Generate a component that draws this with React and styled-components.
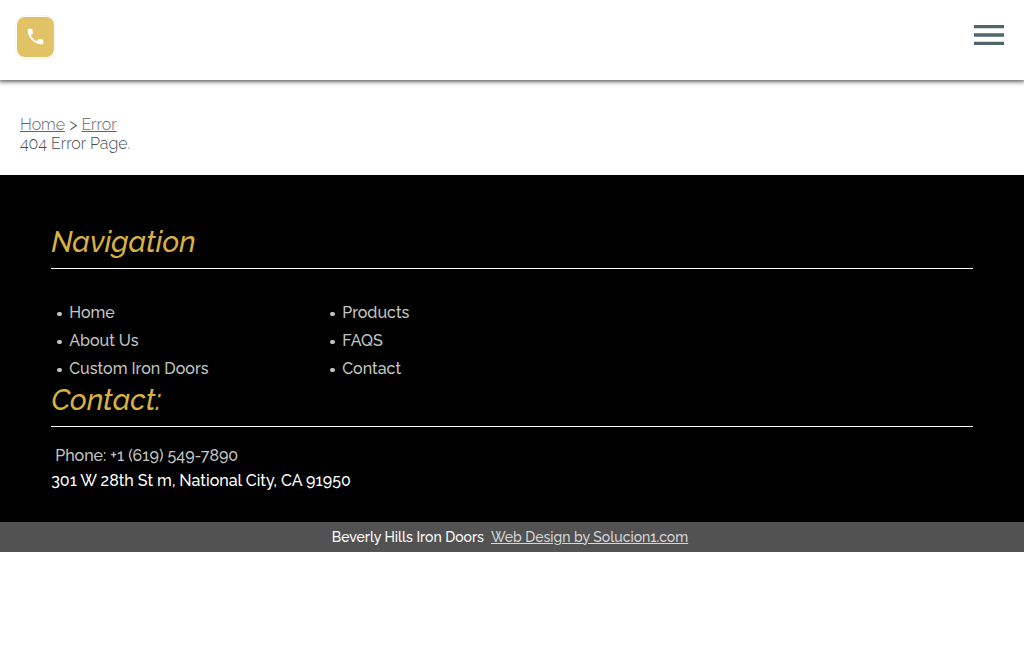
import React from "react";
import styled, { createGlobalStyle } from "styled-components";

const GlobalStyle = createGlobalStyle`
  *, *::before, *::after { box-sizing: border-box; }
  body {
    margin: 0;
    background: #fff;
    color: #444a50;
    font-family: Raleway, Lato, "Open Sans", sans-serif;
    font-size: 16px;
    line-height: 19px;
  }
`;

const Header = styled.header`
  display: flex;
  justify-content: space-between;
  align-items: flex-start;
  height: 80px;
  padding: 15px 20px 0 15px;
  background: #fff;
  box-shadow: 0 1px 4px 1px #666;
`;

const PhoneButton = styled.a`
  display: flex;
  align-items: center;
  justify-content: center;
  width: 41px;
  height: 44px;
  border: 1px solid #fbf5e6;
  border-radius: 12px;
  color: #fff;
`;

const PhoneFace = styled.span`
  display: flex;
  align-items: center;
  justify-content: center;
  width: 37px;
  height: 40px;
  padding-bottom: 2px;
  flex: none;
  border-radius: 8px;
  background: #e1c267;
`;

const MenuButton = styled.button`
  display: block;
  margin-top: 10px;
  padding: 0;
  border: 0;
  background: none;
  color: #4f666a;
  cursor: pointer;

  svg { display: block; }
`;

const Main = styled.main`
  padding: 35px 20px 22px;
  font-weight: 300;
`;

const Crumbs = styled.nav`
  a { color: #666; }
`;

const Text = styled.p`
  margin: 0;
`;

const FooterBody = styled.div`
  padding: 49px 5% 29px;
  background: #000;
  color: #fff;
`;

const Heading = styled.h2`
  margin: 0;
  padding-bottom: 8px;
  border-bottom: 1px solid #fff;
  color: #d9b140;
  font-size: 29px;
  font-style: italic;
  font-weight: 500;
  line-height: 36px;
`;

const LinkList = styled.ul`
  display: grid;
  grid-auto-flow: column;
  grid-template-rows: repeat(3, 28px);
  grid-template-columns: 273px 273px;
  margin: 0;
  padding: 29px 0 0 6px;
  list-style: none;
  line-height: 26px;
`;

const LinkItem = styled.li`
  display: flex;
  align-items: center;
  gap: 7px;
  padding-top: 2px;
  color: #c4c4c4;
  font-weight: 500;

  &::before {
    content: "";
    width: 5px;
    height: 4px;
    margin-top: 2px;
    border-radius: 2px;
    background: currentColor;
  }
`;

const PlainLink = styled.a`
  color: #c4c4c4;
  text-decoration: none;
`;

const Address = styled.address`
  padding-top: 16px;
  font-style: normal;
  font-weight: 500;
  line-height: 25px;
`;

const Phone = styled.div`
  padding-left: 4px;
`;

const Credits = styled.div`
  display: flex;
  justify-content: center;
  gap: 7px;
  padding-right: 4px;
  background: #525252;
  color: #fff;
  font-size: 14px;
  font-weight: 500;
  line-height: 30px;

  a { color: #d6d6d6; }
`;

const pages = ["Home", "About Us", "Custom Iron Doors", "Products", "FAQS", "Contact"];

export default function App() {
  return (
    <>
      <GlobalStyle />
      <Header>
        <PhoneButton href="tel:+16195497890" aria-label="Call us">
          <PhoneFace>
            <svg width="21" height="21" viewBox="0 0 24 24" fill="currentColor" aria-hidden="true">
              <path d="M6.62 10.79c1.44 2.83 3.76 5.14 6.59 6.59l2.2-2.2c.27-.27.67-.36 1.02-.24 1.12.37 2.33.57 3.57.57.55 0 1 .45 1 1V20c0 .55-.45 1-1 1-9.39 0-17-7.61-17-17 0-.55.45-1 1-1h3.5c.55 0 1 .45 1 1 0 1.25.2 2.45.57 3.57.11.35.03.74-.25 1.02l-2.2 2.2z" />
            </svg>
          </PhoneFace>
        </PhoneButton>
        <MenuButton type="button" aria-label="Open menu">
          <svg width="30" height="20" viewBox="0 0 30 20" fill="currentColor" aria-hidden="true">
            <path d="M0 0h30v3.3H0zM0 8.35h30v3.3H0zM0 16.7h30V20H0z" />
          </svg>
        </MenuButton>
      </Header>
      <Main>
        <Crumbs aria-label="Breadcrumb">
          <a href="#home">Home</a> &gt; <a href="#error">Error</a>
        </Crumbs>
        <Text>404 Error Page.</Text>
      </Main>
      <footer>
        <FooterBody>
          <Heading>Navigation</Heading>
          <LinkList>
            {pages.map((page) => (
              <LinkItem key={page}>
                <PlainLink href="#page">{page}</PlainLink>
              </LinkItem>
            ))}
          </LinkList>
          <Heading>Contact:</Heading>
          <Address>
            <Phone>
              <PlainLink href="tel:+16195497890">Phone: +1 (619) 549-7890</PlainLink>
            </Phone>
            301 W 28th St m, National City, CA 91950
          </Address>
        </FooterBody>
        <Credits>
          <span>Beverly Hills Iron Doors</span>
          <a href="#design">Web Design by Solucion1.com</a>
        </Credits>
      </footer>
    </>
  );
}
